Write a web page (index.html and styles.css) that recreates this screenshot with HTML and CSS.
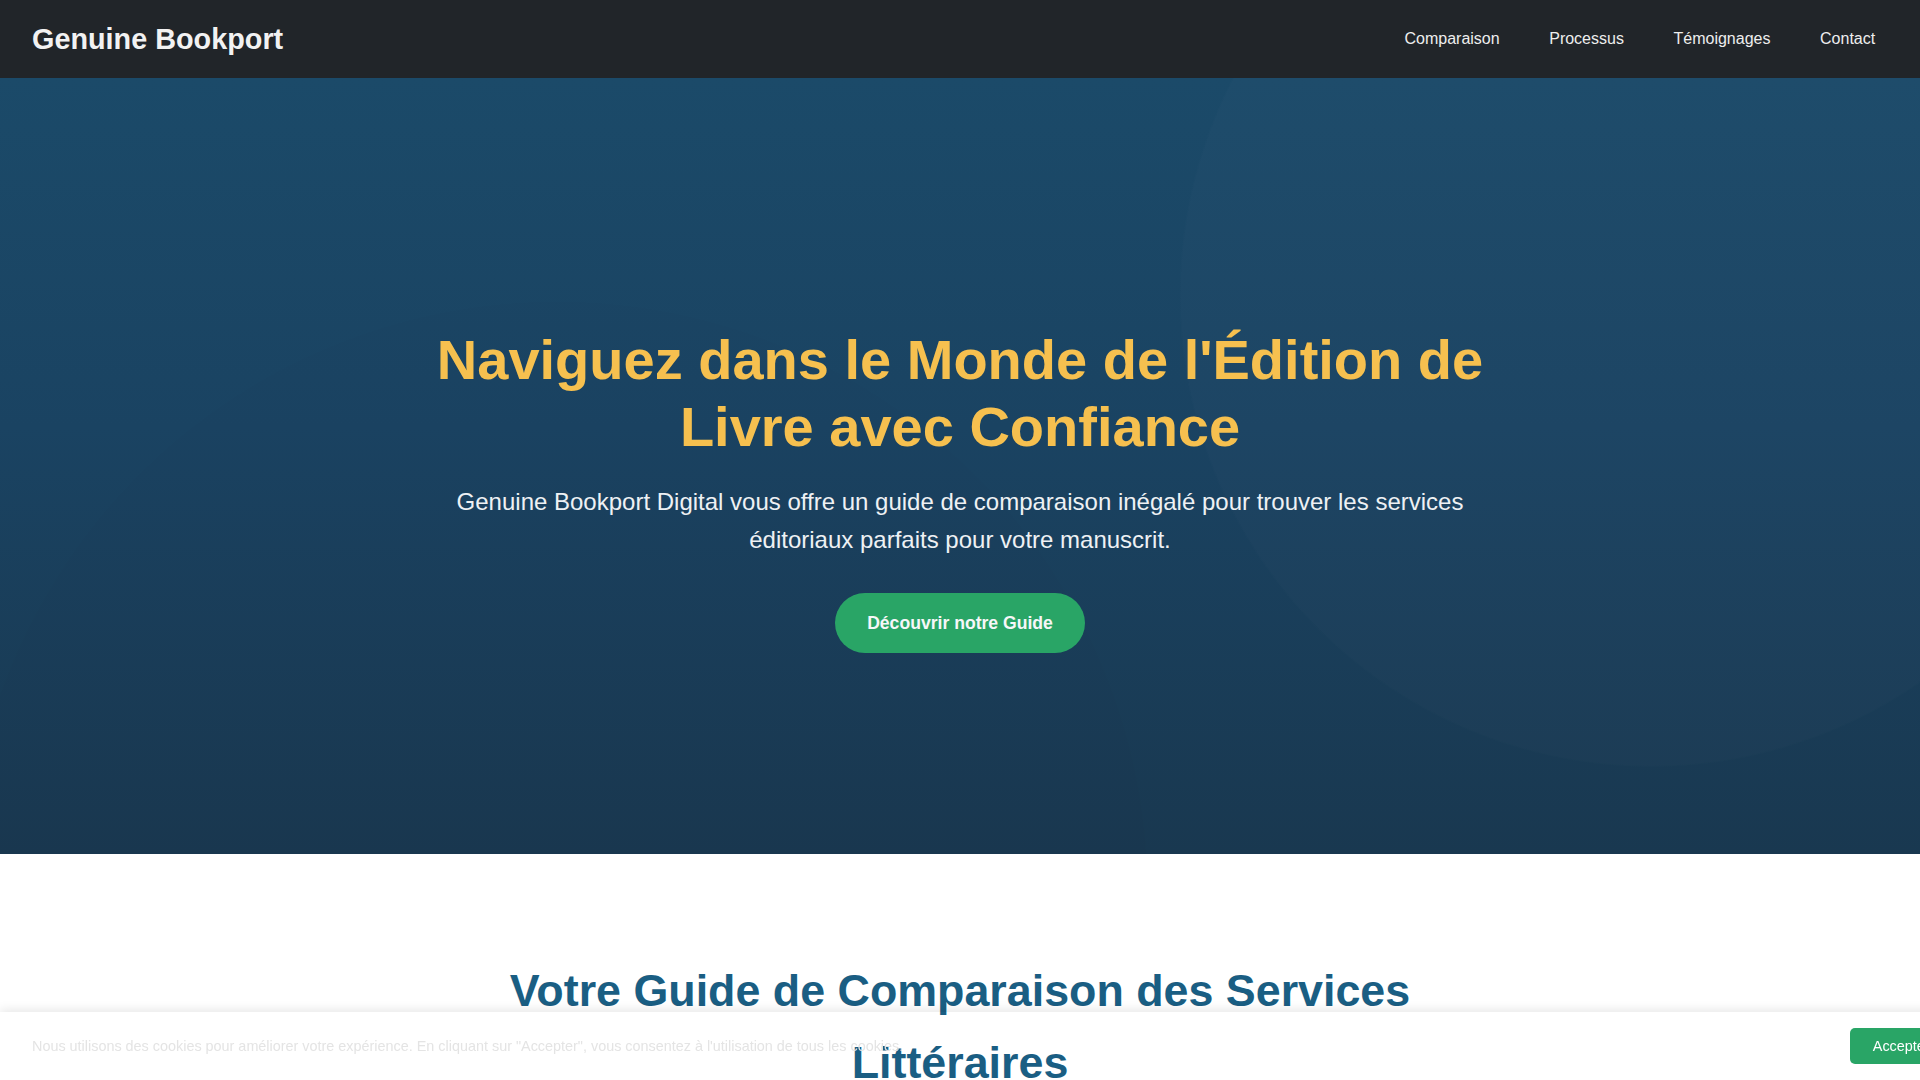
FILE: index.html
```html
<!DOCTYPE html>
<html lang="fr">
<head>
<meta charset="utf-8">
<title>Genuine Bookport</title>
<link rel="stylesheet" href="styles.css">
</head>
<body>
<header class="navbar">
  <div class="logo">Genuine Bookport</div>
  <nav>
    <ul class="nav-links">
      <li><a href="#comparaison">Comparaison</a></li>
      <li><a href="#processus">Processus</a></li>
      <li><a href="#temoignages">Témoignages</a></li>
      <li><a href="#contact">Contact</a></li>
    </ul>
  </nav>
</header>

<section class="hero">
  <div class="hero-content">
    <h1 class="hero-title">Naviguez dans le Monde de l'Édition de Livre avec Confiance</h1>
    <p class="hero-text">Genuine Bookport Digital vous offre un guide de comparaison inégalé pour trouver les services éditoriaux parfaits pour votre manuscrit.</p>
    <a class="btn-primary" href="#comparaison">Découvrir notre Guide</a>
  </div>
</section>

<section class="guide" id="comparaison">
  <h2 class="section-title">Votre Guide de Comparaison des Services Littéraires</h2>
</section>

<div class="cookie-banner">
  <p class="cookie-text">Nous utilisons des cookies pour améliorer votre expérience. En cliquant sur "Accepter", vous consentez à l'utilisation de tous les cookies.</p>
  <button class="cookie-btn" type="button">Accepter</button>
</div>
</body>
</html>
```

FILE: styles.css
```css
* {
  margin: 0;
  padding: 0;
}

body {
  font-family: "Liberation Sans", Arial, sans-serif;
  line-height: 1.6;
  color: #333333;
  background: #ffffff;
}

.navbar {
  display: flex;
  justify-content: space-between;
  align-items: center;
  padding: 1rem 2rem;
  background: #212529;
}

.logo {
  font-size: 1.8rem;
  font-weight: 700;
  color: #f2f2f2;
}

.nav-links {
  display: flex;
  gap: 1.5rem;
  list-style: none;
}

.nav-links a {
  display: block;
  padding: 0.5rem 0.8rem;
  color: #eeeeee;
  text-decoration: none;
  font-size: 1rem;
}

.hero {
  padding: 248px 2rem 201px;
  text-align: center;
  background:
    radial-gradient(circle at 86% 28%, rgba(255, 255, 255, 0.01) 0 470px, rgba(255, 255, 255, 0) 472px),
    radial-gradient(circle at 29% 105%, rgba(0, 0, 0, 0.012) 0 590px, rgba(0, 0, 0, 0) 592px),
    linear-gradient(180deg, #1b4a69 0%, #1a4362 45%, #193850 100%);
}

.hero-content {
  max-width: 1100px;
  margin: 0 auto;
}

.hero-title {
  font-size: 3.5rem;
  line-height: 1.2;
  font-weight: 700;
  color: #f6c04f;
  margin-bottom: 1.4rem;
}

.hero-text {
  font-size: 1.5rem;
  color: #eef1f4;
  margin-bottom: 2.1rem;
}

.btn-primary {
  display: inline-block;
  padding: 1rem 2rem;
  font-size: 1.1rem;
  font-weight: 700;
  color: #f6f7f8;
  background: #29a566;
  border-radius: 50px;
  text-decoration: none;
}

.guide {
  padding: 101px 2rem 4rem;
  text-align: center;
}

.section-title {
  max-width: 1100px;
  margin: 0 auto;
  font-size: 2.8rem;
  font-weight: 700;
  color: #1a5e83;
}

.cookie-banner {
  position: fixed;
  left: 0;
  bottom: 0;
  width: 100%;
  padding: 1rem 2rem;
  display: flex;
  justify-content: space-between;
  align-items: center;
  box-shadow: 0 -2px 10px rgba(0, 0, 0, 0.1);
}

.cookie-text {
  font-size: 0.9rem;
  color: #e4e4e4;
}

.cookie-btn {
  flex-shrink: 0;
  padding: 0.4rem 1.4rem;
  font-family: "Liberation Sans", Arial, sans-serif;
  font-size: 0.9rem;
  line-height: 1.6;
  color: #ffffff;
  background: #29a566;
  border: none;
  border-radius: 5px;
}
```
